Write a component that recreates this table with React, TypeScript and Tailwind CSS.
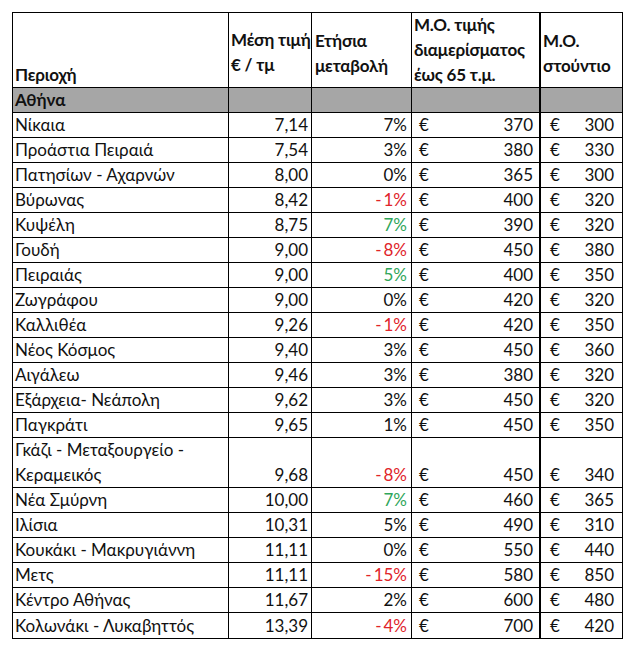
type Row = {
  area: string[];
  price: string;
  change: string;
  tone?: "red" | "green";
  flat: string;
  studio: string;
};

const rows: Row[] = [
  { area: ["Νίκαια"], price: "7,14", change: "7%", flat: "370", studio: "300" },
  { area: ["Προάστια Πειραιά"], price: "7,54", change: "3%", flat: "380", studio: "330" },
  { area: ["Πατησίων - Αχαρνών"], price: "8,00", change: "0%", flat: "365", studio: "300" },
  { area: ["Βύρωνας"], price: "8,42", change: "-1%", tone: "red", flat: "400", studio: "320" },
  { area: ["Κυψέλη"], price: "8,75", change: "7%", tone: "green", flat: "390", studio: "320" },
  { area: ["Γουδή"], price: "9,00", change: "-8%", tone: "red", flat: "450", studio: "380" },
  { area: ["Πειραιάς"], price: "9,00", change: "5%", tone: "green", flat: "400", studio: "350" },
  { area: ["Ζωγράφου"], price: "9,00", change: "0%", flat: "420", studio: "320" },
  { area: ["Καλλιθέα"], price: "9,26", change: "-1%", tone: "red", flat: "420", studio: "350" },
  { area: ["Νέος Κόσμος"], price: "9,40", change: "3%", flat: "450", studio: "360" },
  { area: ["Αιγάλεω"], price: "9,46", change: "3%", flat: "380", studio: "320" },
  { area: ["Εξάρχεια- Νεάπολη"], price: "9,62", change: "3%", flat: "450", studio: "320" },
  { area: ["Παγκράτι"], price: "9,65", change: "1%", flat: "450", studio: "350" },
  { area: ["Γκάζι - Μεταξουργείο -", "Κεραμεικός"], price: "9,68", change: "-8%", tone: "red", flat: "450", studio: "340" },
  { area: ["Νέα Σμύρνη"], price: "10,00", change: "7%", tone: "green", flat: "460", studio: "365" },
  { area: ["Ιλίσια"], price: "10,31", change: "5%", flat: "490", studio: "310" },
  { area: ["Κουκάκι - Μακρυγιάννη"], price: "11,11", change: "0%", flat: "550", studio: "440" },
  { area: ["Μετς"], price: "11,11", change: "-15%", tone: "red", flat: "580", studio: "850" },
  { area: ["Κέντρο Αθήνας"], price: "11,67", change: "2%", flat: "600", studio: "480" },
  { area: ["Κολωνάκι - Λυκαβηττός"], price: "13,39", change: "-4%", tone: "red", flat: "700", studio: "420" },
];

function Change({ value, tone }: { value: string; tone?: "red" | "green" }) {
  const color = tone === "red" ? "text-[#e0242a]" : tone === "green" ? "text-[#2fa65a]" : "";
  if (value.startsWith("-")) {
    return (
      <span className={color}>
        <span className="mr-[2px]">-</span>
        {value.slice(1)}
      </span>
    );
  }
  return <span className={color}>{value}</span>;
}

export default function App() {
  return (
    <div
      className="min-h-screen bg-white pl-[12px] pt-[12px] text-[17px] text-[#111]"
      style={{ fontFamily: "Lato, 'Noto Sans', sans-serif" }}
    >
      <div className="w-[611px] border border-black">
        {/* header */}
        <div className="flex h-[75px] whitespace-nowrap border-b border-black font-bold leading-[25px] tracking-[-0.2px]">
          <div className="flex w-[216px] items-end border-r border-black pl-[2px]">Περιοχή</div>
          <div className="flex w-[83px] flex-col justify-center border-r border-black pb-[2px] pl-[2px] pt-[5px]">
            <span>Μέση τιμή</span>
            <span>€ / τμ</span>
          </div>
          <div className="flex w-[100px] flex-col justify-center border-r border-black pl-[3px] pt-[5px]">
            <span>Ετήσια</span>
            <span>μεταβολή</span>
          </div>
          <div className="flex w-[129px] flex-col justify-end border-r-2 border-black pl-[2px]">
            <span>Μ.Ο. τιμής</span>
            <span>διαμερίσματος</span>
            <span>έως 65 τ.μ.</span>
          </div>
          <div className="flex w-[81px] flex-col justify-center pl-[2px] pt-[5px]">
            <span>Μ.Ο.</span>
            <span>στούντιο</span>
          </div>
        </div>

        {/* group row */}
        <div className="flex h-[25px] border-b border-black bg-[#a6a6a6] font-bold leading-[24px]">
          <div className="w-[216px] border-r border-black pl-[2px]">Αθήνα</div>
          <div className="w-[83px] border-r border-black" />
          <div className="w-[100px] border-r border-black" />
          <div className="w-[129px] border-r-2 border-black" />
          <div className="w-[81px]" />
        </div>

        {rows.map((r, i) => {
          const tall = r.area.length > 1;
          return (
            <div
              key={r.area.join(" ")}
              className={`flex leading-[24px] ${tall ? "h-[50px]" : "h-[25px]"} ${
                i < rows.length - 1 ? "border-b border-black" : ""
              }`}
            >
              <div className="flex w-[216px] flex-col justify-end border-r border-black pl-[2px]">
                {r.area.map((a) => (
                  <span key={a} className={tall ? "leading-[25px]" : ""}>
                    {a}
                  </span>
                ))}
              </div>
              <div className="flex w-[83px] items-end justify-end border-r border-black pr-[3px]">{r.price}</div>
              <div className="flex w-[100px] items-end justify-end border-r border-black pr-[4px]">
                <Change value={r.change} tone={r.tone} />
              </div>
              <div className="flex w-[129px] items-end justify-between border-r-2 border-black pl-[7px] pr-[6px]">
                <span>€</span>
                <span>{r.flat}</span>
              </div>
              <div className="flex w-[81px] items-end justify-between pl-[9px] pr-[8px]">
                <span>€</span>
                <span>{r.studio}</span>
              </div>
            </div>
          );
        })}
      </div>
    </div>
  );
}
